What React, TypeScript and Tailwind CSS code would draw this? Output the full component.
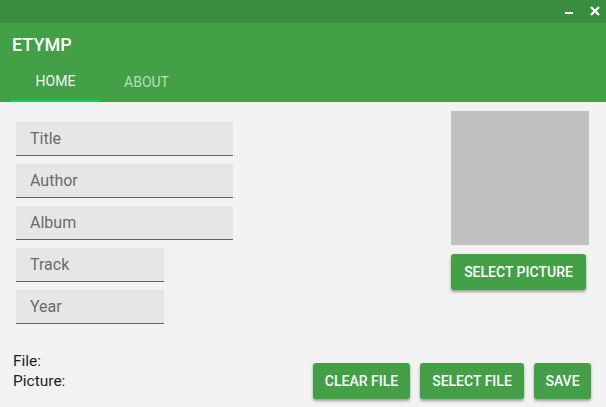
import React from "react";

const font = { fontFamily: "Roboto, 'Liberation Sans', sans-serif" };

function Field({ label, wide }: { label: string; wide: boolean }) {
  return (
    <div
      className={`${wide ? "w-[217px]" : "w-[148px]"} h-[34px] bg-[#e6e6e6] border-b border-[#616161] flex items-center pl-[14px] text-[16px] text-[#6b6b6b]`}
    >
      {label}
    </div>
  );
}

function Btn({ label, w }: { label: string; w: string }) {
  return (
    <button
      className={`${w} h-[36px] bg-[#43a047] text-white text-[14px] font-medium rounded-[3px] shadow-[0_2px_3px_rgba(0,0,0,0.35)] flex items-center justify-center`}
    >
      {label}
    </button>
  );
}

export default function App() {
  return (
    <div className="w-[606px] h-[407px] bg-[#f2f2f2] flex flex-col overflow-hidden" style={font}>
      <div className="h-[23px] bg-[#388e3c] flex items-start justify-end pr-[6px] shrink-0">
        <div className="w-[8px] h-[2px] bg-white mt-[12px] mr-[17px]" />
        <svg width="10" height="10" viewBox="0 0 10 10" className="mt-[6px]">
          <path d="M1 1 L9 9 M9 1 L1 9" stroke="white" strokeWidth="2.2" />
        </svg>
      </div>
      <div className="h-[79px] bg-[#43a047] flex flex-col shrink-0">
        <div className="h-[39px] flex items-center pl-[12px] pt-[3px] text-white text-[18px] font-medium">
          ETYMP
        </div>
        <div className="h-[40px] flex pl-[10px]">
          <div className="w-[91px] flex flex-col">
            <div className="flex-1 flex items-center justify-center text-[14px] font-normal text-[#eef7ee]">
              HOME
            </div>
            <div className="h-[2px] bg-[#00d45a]" />
          </div>
          <div className="w-[91px] flex flex-col">
            <div className="flex-1 flex items-center justify-center text-[14px] font-normal text-[#b9dfb8]">
              ABOUT
            </div>
          </div>
        </div>
      </div>
      <div className="flex-1 flex flex-col">
        <div className="flex justify-between">
          <div className="flex flex-col gap-[8px] pt-[20px] pl-[16px]">
            <Field label="Title" wide />
            <Field label="Author" wide />
            <Field label="Album" wide />
            <Field label="Track" wide={false} />
            <Field label="Year" wide={false} />
          </div>
          <div className="flex flex-col pt-[9px] pr-[17px]">
            <div className="w-[138px] h-[134px] bg-[#c0c0c0]" />
            <div className="mt-[9px]">
              <Btn label="SELECT PICTURE" w="w-[135px]" />
            </div>
          </div>
        </div>
        <div className="flex justify-between mt-[27px] pl-[13px] pr-[15px]">
          <div className="text-[15.5px] leading-[20px] text-[#1e1e1e]">
            <div>File:</div>
            <div>Picture:</div>
          </div>
          <div className="flex gap-[10px] mt-[12px]">
            <Btn label="CLEAR FILE" w="w-[97px]" />
            <Btn label="SELECT FILE" w="w-[104px]" />
            <Btn label="SAVE" w="w-[57px]" />
          </div>
        </div>
      </div>
    </div>
  );
}
